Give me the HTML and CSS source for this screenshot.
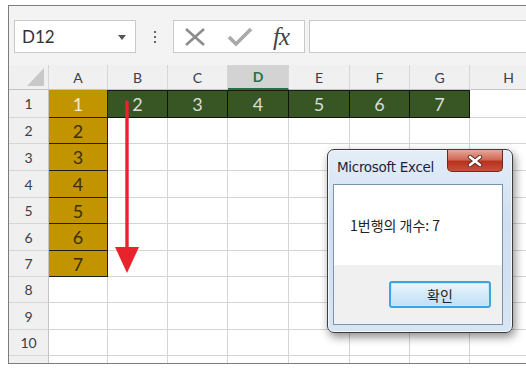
FILE: index.html
```html
<!DOCTYPE html>
<html>
<head>
<meta charset="utf-8">
<title>Excel</title>
<link rel="stylesheet" href="styles.css">
</head>
<body>
<div class="frame">
	<!-- 수식 입력줄 -->
	<div class="toolbar">
		<div class="namebox">D12<span class="drop"></span></div>
		<div class="dots"><i></i><i></i><i></i></div>
		<div class="fxbox">
			<svg class="ic-x" width="24" height="20" viewBox="0 0 24 20"><path d="M3 2 L21 18 M21 2 L3 18" stroke="#8c8c8c" stroke-width="2.6" fill="none"/></svg>
			<svg class="ic-ok" width="26" height="20" viewBox="0 0 26 20"><path d="M2 10 L9 17 L24 2" stroke="#a9a9a9" stroke-width="3.6" fill="none"/></svg>
			<span class="fx">fx</span>
		</div>
		<div class="formula"></div>
	</div>

	<!-- 시트 -->
	<div class="sheet">
		<div class="hd corner"><span class="tri"></span></div>
		<div class="hd">A</div><div class="hd">B</div><div class="hd">C</div><div class="hd sel">D</div><div class="hd">E</div><div class="hd">F</div><div class="hd">G</div><div class="hd">H</div>

		<div class="rh">1</div><div class="c gold lt">1</div><div class="c green">2</div><div class="c green">3</div><div class="c green">4</div><div class="c green">5</div><div class="c green">6</div><div class="c green">7</div><div class="c"></div>
		<div class="rh">2</div><div class="c gold">2</div><div class="c"></div><div class="c"></div><div class="c"></div><div class="c"></div><div class="c"></div><div class="c"></div><div class="c"></div>
		<div class="rh">3</div><div class="c gold">3</div><div class="c"></div><div class="c"></div><div class="c"></div><div class="c"></div><div class="c"></div><div class="c"></div><div class="c"></div>
		<div class="rh">4</div><div class="c gold">4</div><div class="c"></div><div class="c"></div><div class="c"></div><div class="c"></div><div class="c"></div><div class="c"></div><div class="c"></div>
		<div class="rh">5</div><div class="c gold">5</div><div class="c"></div><div class="c"></div><div class="c"></div><div class="c"></div><div class="c"></div><div class="c"></div><div class="c"></div>
		<div class="rh">6</div><div class="c gold">6</div><div class="c"></div><div class="c"></div><div class="c"></div><div class="c"></div><div class="c"></div><div class="c"></div><div class="c"></div>
		<div class="rh">7</div><div class="c gold">7</div><div class="c"></div><div class="c"></div><div class="c"></div><div class="c"></div><div class="c"></div><div class="c"></div><div class="c"></div>
		<div class="rh">8</div><div class="c"></div><div class="c"></div><div class="c"></div><div class="c"></div><div class="c"></div><div class="c"></div><div class="c"></div><div class="c"></div>
		<div class="rh">9</div><div class="c"></div><div class="c"></div><div class="c"></div><div class="c"></div><div class="c"></div><div class="c"></div><div class="c"></div><div class="c"></div>
		<div class="rh">10</div><div class="c"></div><div class="c"></div><div class="c"></div><div class="c"></div><div class="c"></div><div class="c"></div><div class="c"></div><div class="c"></div>
		<div class="rh"></div><div class="c"></div><div class="c"></div><div class="c"></div><div class="c"></div><div class="c"></div><div class="c"></div><div class="c"></div><div class="c"></div>
	</div>
</div>

<!-- 빨간 화살표 -->
<svg class="arrow" width="26" height="176" viewBox="0 0 26 176">
	<path d="M13 3 L13 150" stroke="#e8232b" stroke-width="3.4" stroke-linecap="round" fill="none"/>
	<path d="M1 148 L25 148 L13 174 Z" fill="#e8232b"/>
</svg>

<!-- 메시지 박스 -->
<div class="msgbox">
	<div class="title">
		<span>Microsoft Excel</span>
		<div class="close">
			<svg width="16" height="12" viewBox="0 0 16 12"><path d="M3 2 L13 10 M13 2 L3 10" stroke="#5a2a24" stroke-width="4.4" stroke-linecap="round"/><path d="M3 2 L13 10 M13 2 L3 10" stroke="#fff" stroke-width="2.6" stroke-linecap="round"/></svg>
		</div>
	</div>
	<div class="client">
		<div class="msg">1번행의 개수: 7</div>
		<div class="btnrow"><div class="btn">확인</div></div>
	</div>
</div>
</body>
</html>
```
FILE: styles.css
```css
*{ margin:0; padding:0; box-sizing:border-box;}
body{ background:#fff; width:526px; height:376px; overflow:hidden; position:relative; font-family:Lato, "Noto Sans", sans-serif;}

.frame{ margin:5px 0 0 8px; border-top:1px solid #7c7c7c; border-left:1px solid #7c7c7c; border-bottom:1px solid #7c7c7c; width:540px; height:359px; overflow:hidden;}

/* 수식 입력줄 */
.toolbar{ height:59px; background:#f3f3f3; display:flex; align-items:flex-start; padding:14px 0 0 5px;}
.namebox{ position:relative; width:122px; height:33px; background:#fff; border:1px solid #c9c9c9; font-size:17px; color:#333; line-height:31px; padding-left:7px;}
.drop{ position:absolute; right:9px; top:14px; border-left:4px solid transparent; border-right:4px solid transparent; border-top:5px solid #555;}
.dots{ width:37px; height:33px; display:flex; flex-direction:column; align-items:center; justify-content:center; gap:3px;}
.dots i{ display:block; width:2px; height:2px; background:#666;}
.fxbox{ width:132px; height:33px; background:#fff; border:1px solid #c9c9c9; display:flex; align-items:center; padding-left:9px;}
.ic-x{ margin-top:1px;}
.ic-ok{ margin-left:20px; margin-top:1px;}
.fx{ margin-left:20px; font-family:"Liberation Serif", serif; font-style:italic; font-size:25px; color:#444; letter-spacing:-1px;}
.formula{ flex:1; margin-left:4px; height:33px; background:#fff; border:1px solid #c9c9c9;}

/* 시트 */
.sheet{ display:grid; grid-template-columns:40px 59px 60px 60px 61px 61px 60px 60px 1fr; grid-template-rows:25px 28px 26px 27px 27px 26px 27px 26px 26px 27px 26px 10px;}
.hd{ background:#f0f0f0; border-right:1px solid #d6d6d6; border-bottom:1px solid #c4c4c4; color:#3d3d4a; font-size:14px; display:flex; align-items:center; justify-content:center;}
.corner{ position:relative;}
.tri{ position:absolute; right:4px; bottom:3px; width:0; height:0; border-left:17px solid transparent; border-bottom:18px solid #c8c8c8;}
.hd.sel{ background:#d3d3d3; color:#217346; font-weight:bold; border-bottom:2px solid #217346;}
.rh{ background:#f0f0f0; border-right:1px solid #c4c4c4; border-bottom:1px solid #d6d6d6; color:#3d3d4a; font-size:14px; display:flex; align-items:center; justify-content:center;}
.c{ border-right:1px solid #d4d4d4; border-bottom:1px solid #d4d4d4; font-size:18px; display:flex; align-items:center; justify-content:center;}
.gold{ background:#c29400; color:#3b2f00; border-right:1px solid #1e1e1e; border-bottom:1px solid #1e1e1e;}
.gold.lt{ color:#f4ecd4;}
.green{ background:#375623; color:#dcdcdc; border-right:1px solid #111; border-bottom:1px solid #111; box-shadow:inset 0 1px 0 #1a1a1a;}

/* 화살표 */
.arrow{ position:absolute; left:114px; top:99px;}

/* 메시지 박스 */
.msgbox{ position:absolute; left:327px; top:149px; width:186px; height:184px; border:1px solid #3d3d3d; border-radius:7px; background:linear-gradient(#e4eef8, #cfdff0 40%, #d7e5f3); box-shadow:2px 4px 10px rgba(0,0,0,.45), inset 0 0 0 1px #f4f8fc; padding:0 9px 8px 5px;}
.title{ height:34px; display:flex; align-items:flex-start; justify-content:space-between; position:relative;}
.title span{ font-family:"DejaVu Sans", sans-serif; font-size:13.5px; color:#1e1e3c; margin:9px 0 0 4px; letter-spacing:-0.3px;}
.close{ width:56px; height:22px; margin-top:0; border:1px solid #6b2a22; border-top:none; border-radius:0 0 5px 5px; background:linear-gradient(#e6a89a, #d06a58 45%, #b8321f 55%, #c8503a); display:flex; align-items:center; justify-content:center;}
.client{ height:141px; border:1px solid #7d92ab; background:#f0f0f0; display:flex; flex-direction:column;}
.msg{ height:80px; background:#fff; font-family:"Noto Sans CJK KR", sans-serif; font-size:14px; color:#222; padding:30px 0 0 16px;}
.btnrow{ flex:1; display:flex; justify-content:flex-end; align-items:flex-start; padding:16px 11px 0 0;}
.btn{ width:102px; height:27px; border:2px solid #3fa3de; border-radius:3px; background:linear-gradient(#ecf6fd, #d4eaf8 50%, #bfe0f6); font-family:"Noto Sans CJK KR", sans-serif; font-size:14px; color:#222; display:flex; align-items:center; justify-content:center; box-shadow:inset 0 0 0 1px #c6eafc;}
```
